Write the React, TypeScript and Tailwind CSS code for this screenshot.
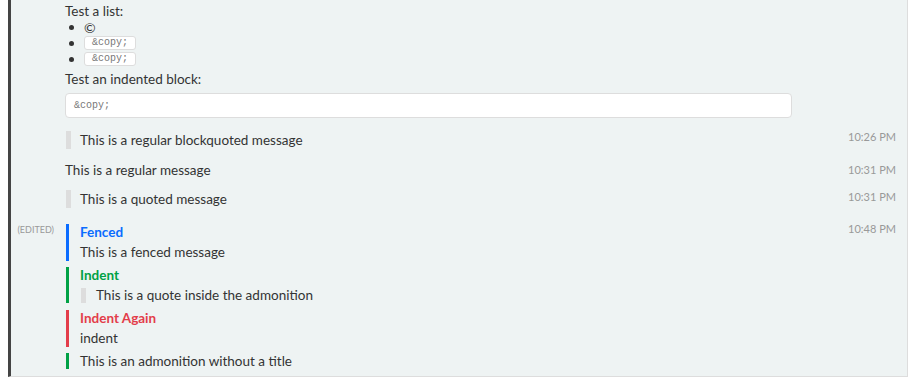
import React from "react";

const font = { fontFamily: "Lato, 'Noto Sans', sans-serif" };

const Time = ({ t, className }: { t: string; className: string }) => (
  <div className={`w-[80px] shrink-0 pr-[11px] text-right text-[11px] leading-[16px] text-[#999] ${className}`}>
    {t}
  </div>
);

const Code = ({ children }: { children: React.ReactNode }) => (
  <span className="inline-block h-[14px] rounded-[3px] border border-[#ddd] bg-white px-[7px] font-['Liberation_Mono',monospace] text-[10px] leading-[12px] text-[#777]">
    {children}
  </span>
);

const Bullet = ({ children }: { children: React.ReactNode }) => (
  <li className="flex h-[16px] items-center">
    <span className="ml-[4px] mr-[10px] h-[5px] w-[5px] rounded-full bg-[#333]" />
    {children}
  </li>
);

export default function App() {
  return (
    <div className="min-h-[385px] bg-white" style={font}>
      <div className="ml-[8px] flex h-[377px] w-[900px] flex-col border-b border-l-[3px] border-r border-b-[#ddd] border-l-[#444] border-r-[#ddd] bg-[#eef3f3] text-[13.5px] text-[#333]">
        {/* first message */}
        <div className="flex">
          <div className="w-[54px] shrink-0" />
          <div className="flex-1 pt-[3px]">
            <p className="leading-[16px]">Test a list:</p>
            <ul>
              <Bullet>
                <span className="text-[14px]">©</span>
              </Bullet>
              <Bullet>
                <Code>&amp;copy;</Code>
              </Bullet>
              <Bullet>
                <Code>&amp;copy;</Code>
              </Bullet>
            </ul>
            <p className="mt-[4px] leading-[16px]">Test an indented block:</p>
            <pre className="mt-[6px] h-[25px] w-[727px] rounded-[4px] border border-[#ddd] bg-white px-[8px] font-['Liberation_Mono',monospace] text-[10px] leading-[23px] text-[#777]">
              &amp;copy;
            </pre>
          </div>
          <div className="w-[80px] shrink-0" />
        </div>

        {/* blockquoted */}
        <div className="flex">
          <div className="w-[54px] shrink-0" />
          <div className="flex-1 pt-[13px]">
            <blockquote className="ml-[1px] border-l-[5px] border-[#ddd] pl-[9px] leading-[18px]">
              This is a regular blockquoted message
            </blockquote>
          </div>
          <Time t="10:26 PM" className="pt-[11px]" />
        </div>

        {/* regular */}
        <div className="flex">
          <div className="w-[54px] shrink-0" />
          <div className="flex-1 pt-[12px] leading-[18px]">This is a regular message</div>
          <Time t="10:31 PM" className="pt-[13px]" />
        </div>

        {/* quoted */}
        <div className="flex">
          <div className="w-[54px] shrink-0" />
          <div className="flex-1 pt-[11px]">
            <blockquote className="ml-[1px] border-l-[5px] border-[#ddd] pl-[9px] leading-[18px]">
              This is a quoted message
            </blockquote>
          </div>
          <Time t="10:31 PM" className="pt-[10px]" />
        </div>

        {/* admonitions */}
        <div className="flex">
          <div className="w-[54px] shrink-0 pr-[11px] pt-[14px] text-right text-[9px] leading-[16px] text-[#999]">
            (EDITED)
          </div>
          <div className="flex-1 pt-[16px]">
            <div className="ml-[1px] border-l-[3px] border-[#0a6cff] pl-[11px]">
              <div className="font-bold leading-[16px] text-[#0a6cff]">Fenced</div>
              <div className="mt-[3px] leading-[18px]">This is a fenced message</div>
            </div>
            <div className="ml-[1px] mt-[6px] border-l-[3px] border-[#00a145] pl-[11px]">
              <div className="font-bold leading-[16px] text-[#00a145]">Indent</div>
              <blockquote className="ml-[1px] mt-[5px] border-l-[5px] border-[#ddd] pl-[10px] leading-[15px]">
                This is a quote inside the admonition
              </blockquote>
            </div>
            <div className="ml-[1px] mt-[7px] border-l-[3px] border-[#e33d4a] pl-[11px]">
              <div className="font-bold leading-[16px] text-[#e33d4a]">Indent Again</div>
              <div className="mt-[3px] leading-[18px]">indent</div>
            </div>
            <div className="ml-[1px] mt-[6px] border-l-[3px] border-[#00a145] pl-[11px] leading-[16px]">
              This is an admonition without a title
            </div>
          </div>
          <Time t="10:48 PM" className="pt-[13px]" />
        </div>
      </div>
    </div>
  );
}
